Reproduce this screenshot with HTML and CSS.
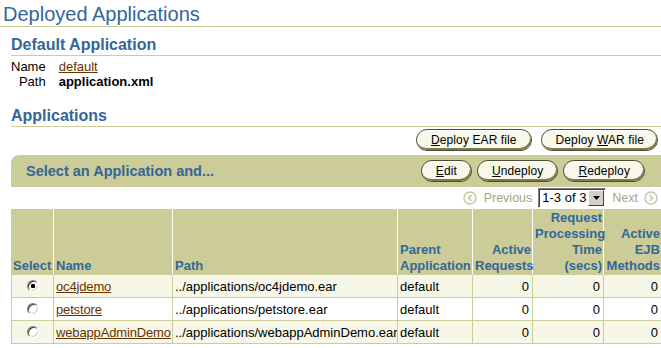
FILE: index.html
```html
<!DOCTYPE html>
<html>
<head>
<meta charset="utf-8">
<title>Deployed Applications</title>
<link rel="stylesheet" href="styles.css">
</head>
<body>
<h1 class="page-title">Deployed Applications</h1>
<div class="content">
  <h2 class="section-title">Default Application</h2>
  <div class="props">
    <span class="prop-label">Name</span><a class="link" href="#">default</a>
    <span class="prop-label">Path</span><span class="prop-value">application.xml</span>
  </div>

  <h2 class="section-title apps-title">Applications</h2>
  <div class="btn-row">
    <button class="btn"><u>D</u>eploy EAR file</button>
    <button class="btn btn-war">Deploy <u>W</u>AR file</button>
  </div>
  <div class="action-bar">
    <span class="bar-title">Select an Application and...</span>
    <div class="bar-buttons">
      <button class="btn"><u>E</u>dit</button>
      <button class="btn"><u>U</u>ndeploy</button>
      <button class="btn"><u>R</u>edeploy</button>
    </div>
  </div>
  <div class="pager">
    <svg class="pager-icon" width="14" height="14" viewBox="0 0 14 14"><circle cx="7" cy="7" r="6" fill="none" stroke="#c6c6a4" stroke-width="1.4"/><path d="M8.5 4 L5.5 7 L8.5 10" fill="none" stroke="#c6c6a4" stroke-width="1.6"/></svg>
    <span class="pager-text">Previous</span>
    <span class="range-select"><span class="range-value">1-3 of 3</span><span class="range-arrow"><svg width="7" height="4" viewBox="0 0 7 4"><path d="M0 0 H7 L3.5 4 Z" fill="#000"/></svg></span></span>
    <span class="pager-text">Next</span>
    <svg class="pager-icon" width="14" height="14" viewBox="0 0 14 14"><circle cx="7" cy="7" r="6" fill="none" stroke="#c6c6a4" stroke-width="1.4"/><path d="M5.5 4 L8.5 7 L5.5 10" fill="none" stroke="#c6c6a4" stroke-width="1.6"/></svg>
  </div>

  <table class="apps">
    <thead>
      <tr>
        <th class="c-select">Select</th>
        <th class="c-name">Name</th>
        <th class="c-path">Path</th>
        <th class="c-parent">Parent Application</th>
        <th class="c-num c-req">Active Requests</th>
        <th class="c-num c-time">Request Processing Time (secs)</th>
        <th class="c-num c-ejb">Active EJB Methods</th>
      </tr>
    </thead>
    <tbody>
      <tr class="odd">
        <td class="center"><input class="radio" type="radio" name="app" checked></td>
        <td class="name"><a class="link" href="#">oc4jdemo</a></td>
        <td>../applications/oc4jdemo.ear</td>
        <td>default</td>
        <td class="num">0</td>
        <td class="num">0</td>
        <td class="num">0</td>
      </tr>
      <tr>
        <td class="center"><input class="radio" type="radio" name="app"></td>
        <td class="name"><a class="link" href="#">petstore</a></td>
        <td>../applications/petstore.ear</td>
        <td>default</td>
        <td class="num">0</td>
        <td class="num">0</td>
        <td class="num">0</td>
      </tr>
      <tr class="odd">
        <td class="center"><input class="radio" type="radio" name="app"></td>
        <td class="name"><a class="link" href="#">webappAdminDemo</a></td>
        <td>../applications/webappAdminDemo.ear</td>
        <td>default</td>
        <td class="num">0</td>
        <td class="num">0</td>
        <td class="num">0</td>
      </tr>
    </tbody>
  </table>
</div>
</body>
</html>
```

FILE: styles.css
```css
html, body {
  margin: 0;
  padding: 0;
  background: #ffffff;
}
body {
  font-family: "Liberation Sans", Arial, sans-serif;
  font-size: 13px;
  color: #000000;
  width: 661px;
  overflow: hidden;
}
.page-title {
  margin: 3px 0 0 0;
  padding-left: 3px;
  font-size: 20px;
  font-weight: normal;
  line-height: 23px;
  color: #336699;
  border-bottom: 1px solid #cccc99;
}
.content {
  padding-left: 11px;
}
.section-title {
  margin: 8px 0 0 0;
  font-size: 16px;
  font-weight: bold;
  line-height: 19px;
  padding-bottom: 1px;
  color: #336699;
  border-bottom: 1px solid #cccc99;
}
.apps-title {
  margin-top: 17px;
}
.props {
  display: grid;
  grid-template-columns: auto auto;
  justify-content: start;
  column-gap: 13px;
  margin-top: 3px;
  line-height: 15px;
}
.prop-label {
  text-align: right;
}
.prop-value {
  font-weight: bold;
}
.link {
  color: #663300;
  text-decoration: underline;
}
.btn-row {
  display: flex;
  justify-content: flex-end;
  gap: 9px;
  padding-right: 3px;
  margin-top: 2px;
}
.btn {
  height: 22px;
  padding: 0 14px 1px 14px;
  border-radius: 11px;
  border: 1px solid #4d4d33;
  background: #f8f8ea;
  box-shadow: inset -1px -2px 0 #7a7a4c, inset 1px 1px 0 #ffffff;
  font-family: "Liberation Sans", Arial, sans-serif;
  font-size: 12px;
  letter-spacing: 0.1px;
  color: #000000;
  line-height: 18px;
}
.btn-war {
  padding: 0 13px 1px 14px;
}
.action-bar {
  margin-top: 4px;
  height: 32px;
  background: #cccc99;
  border-top-left-radius: 8px;
  display: flex;
  align-items: center;
  justify-content: space-between;
  padding: 0 16px 0 15px;
}
.bar-title {
  font-size: 14.5px;
  font-weight: bold;
  color: #336699;
}
.bar-buttons {
  display: flex;
  gap: 5px;
}
.pager {
  display: flex;
  justify-content: flex-end;
  align-items: center;
  gap: 6px;
  height: 20px;
  margin-top: 1px;
  padding-right: 3px;
}
.pager-icon {
  display: block;
}
.pager-icon:first-child {
  margin-right: 1px;
}
.pager-text {
  font-size: 12.5px;
  color: #a5a583;
}
.range-select {
  display: flex;
  align-items: stretch;
  height: 20px;
  box-sizing: border-box;
  width: 68px;
  border: 1px solid;
  border-color: #808080 #ffffff #ffffff #808080;
  box-shadow: inset 1px 1px 0 #404040;
  background: #ffffff;
}
.range-value {
  flex: 1;
  padding-left: 3px;
  padding-top: 1px;
  font-size: 13px;
  line-height: 16px;
}
.range-arrow {
  width: 16px;
  margin: 1px 1px 1px 0;
  background: #d4d0c8;
  box-sizing: border-box;
  border: 1px solid;
  border-color: #ffffff #404040 #404040 #ffffff;
  display: flex;
  align-items: center;
  justify-content: center;
}
.apps {
  margin-top: 1px;
  width: 650px;
  table-layout: fixed;
  border-collapse: separate;
  border-spacing: 0;
}
.apps th, .apps td {
  box-sizing: border-box;
}
.apps th {
  background: #cccc99;
  color: #336699;
  font-size: 13px;
  font-weight: bold;
  line-height: 16px;
  text-align: left;
  vertical-align: bottom;
  padding: 1px 2px 1px 2px;
  border-right: 1px solid #ffffff;
}
.apps th:last-child {
  border-right: none;
}
.apps .c-select { width: 43px; }
.apps .c-name { width: 119px; }
.apps .c-path { width: 225px; }
.apps .c-parent { width: 75px; }
.apps .c-req { width: 60px; }
.apps .c-time { width: 71px; }
.apps .c-ejb { width: 57px; }
.apps th.c-num {
  text-align: right;
  padding-right: 1px;
}
.apps td {
  height: 23px;
  padding: 0 3px 0 2px;
  border-right: 1px solid #cccc99;
  border-bottom: 1px solid #cccc99;
  white-space: nowrap;
  overflow: hidden;
  vertical-align: middle;
  background: #ffffff;
}
.apps td.name {
  padding-right: 0;
}
.apps td.name .link {
  letter-spacing: -0.15px;
}
.apps td:first-child {
  border-left: 1px solid #cccc99;
}
.apps td:last-child {
  border-right: none;
}
.apps tr.odd td {
  background: #f7f7e7;
}
.apps td.num {
  text-align: right;
}
.apps td.center {
  text-align: center;
  padding: 0;
}
.radio {
  -webkit-appearance: none;
  appearance: none;
  width: 12px;
  height: 12px;
  margin: 0 0 0 1px;
  border-radius: 50%;
  box-sizing: border-box;
  border: 1px solid;
  border-color: #808080 #ffffff #ffffff #808080;
  box-shadow: inset 1px 1px 0 #404040, inset -1px -1px 0 #d4d0c8;
  background: #ffffff;
  vertical-align: middle;
  position: relative;
  top: -1px;
}
.radio:checked {
  background: radial-gradient(circle, #000000 0, #000000 2px, #ffffff 2.5px);
}
```
